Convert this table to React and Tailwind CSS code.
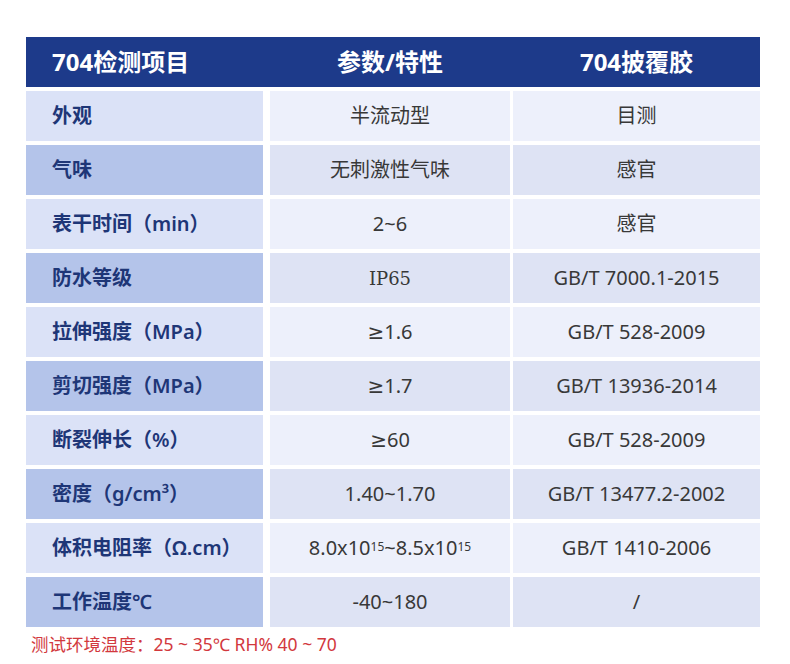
import React from "react";

const ge = <span style={{ fontFamily: '"DejaVu Sans", sans-serif' }}>≥</span>;

const rows = [
  { label: "外观", value: "半流动型", method: "目测" },
  { label: "气味", value: "无刺激性气味", method: "感官" },
  { label: "表干时间（min）", value: "2~6", method: "感官" },
  { label: "防水等级", value: "IP65", method: "GB/T 7000.1-2015", serif: true },
  { label: "拉伸强度（MPa）", value: <>{ge}1.6</>, method: "GB/T 528-2009" },
  { label: "剪切强度（MPa）", value: <>{ge}1.7</>, method: "GB/T 13936-2014" },
  { label: "断裂伸长（%）", value: <>{ge}60</>, method: "GB/T 528-2009" },
  { label: "密度（g/cm³）", value: "1.40~1.70", method: "GB/T 13477.2-2002" },
  {
    label: "体积电阻率（Ω.cm）",
    value: (
      <>
        8.0x10<sup className="text-[12px] relative -top-[4px]">15</sup>~8.5x10
        <sup className="text-[12px] relative -top-[4px]">15</sup>
      </>
    ),
    method: "GB/T 1410-2006",
  },
  { label: "工作温度℃", value: "-40~180", method: "/" },
];

export default function App() {
  return (
    <div
      className="w-[790px] h-[664px] bg-white pt-[37px] px-[26px]"
      style={{ fontFamily: '"Noto Sans", "Noto Sans CJK SC", sans-serif' }}
    >
      <div className="grid grid-cols-[237px_7px_240px_3px_247px] w-[734px] h-[50px] bg-[#1d3a8a] text-white text-[24px] font-bold items-center">
        <div className="pl-[26px]">704检测项目</div>
        <div />
        <div className="text-center">参数/特性</div>
        <div />
        <div className="text-center">704披覆胶</div>
      </div>

      {rows.map((r, i) => {
        const dark = i % 2 === 1;
        return (
          <div
            key={i}
            className="grid grid-cols-[237px_7px_240px_3px_247px] w-[734px] h-[50px] mt-1 text-[20px]"
          >
            <div
              className={`flex items-center pl-[26px] font-semibold text-[#1e3677] ${
                dark ? "bg-[#b4c4ea]" : "bg-[#dbe2f7]"
              }`}
            >
              {r.label}
            </div>
            <div />
            <div
              className={`flex items-center justify-center text-[#383838] ${
                dark ? "bg-[#dee3f4]" : "bg-[#edf0fb]"
              }`}
              style={r.serif ? { fontFamily: '"DejaVu Serif", "Liberation Serif", serif' } : undefined}
            >
              <span className={r.serif ? "text-[18px]" : ""}>{r.value}</span>
            </div>
            <div />
            <div
              className={`flex items-center justify-center text-[#383838] ${
                dark ? "bg-[#dee3f4]" : "bg-[#edf0fb]"
              }`}
            >
              {r.method}
            </div>
          </div>
        );
      })}

      <div className="mt-[4px] pl-[5px] text-[17.5px] text-[#d2383d]">
        测试环境温度：25 ~ 35℃ RH% 40 ~ 70
      </div>
    </div>
  );
}
